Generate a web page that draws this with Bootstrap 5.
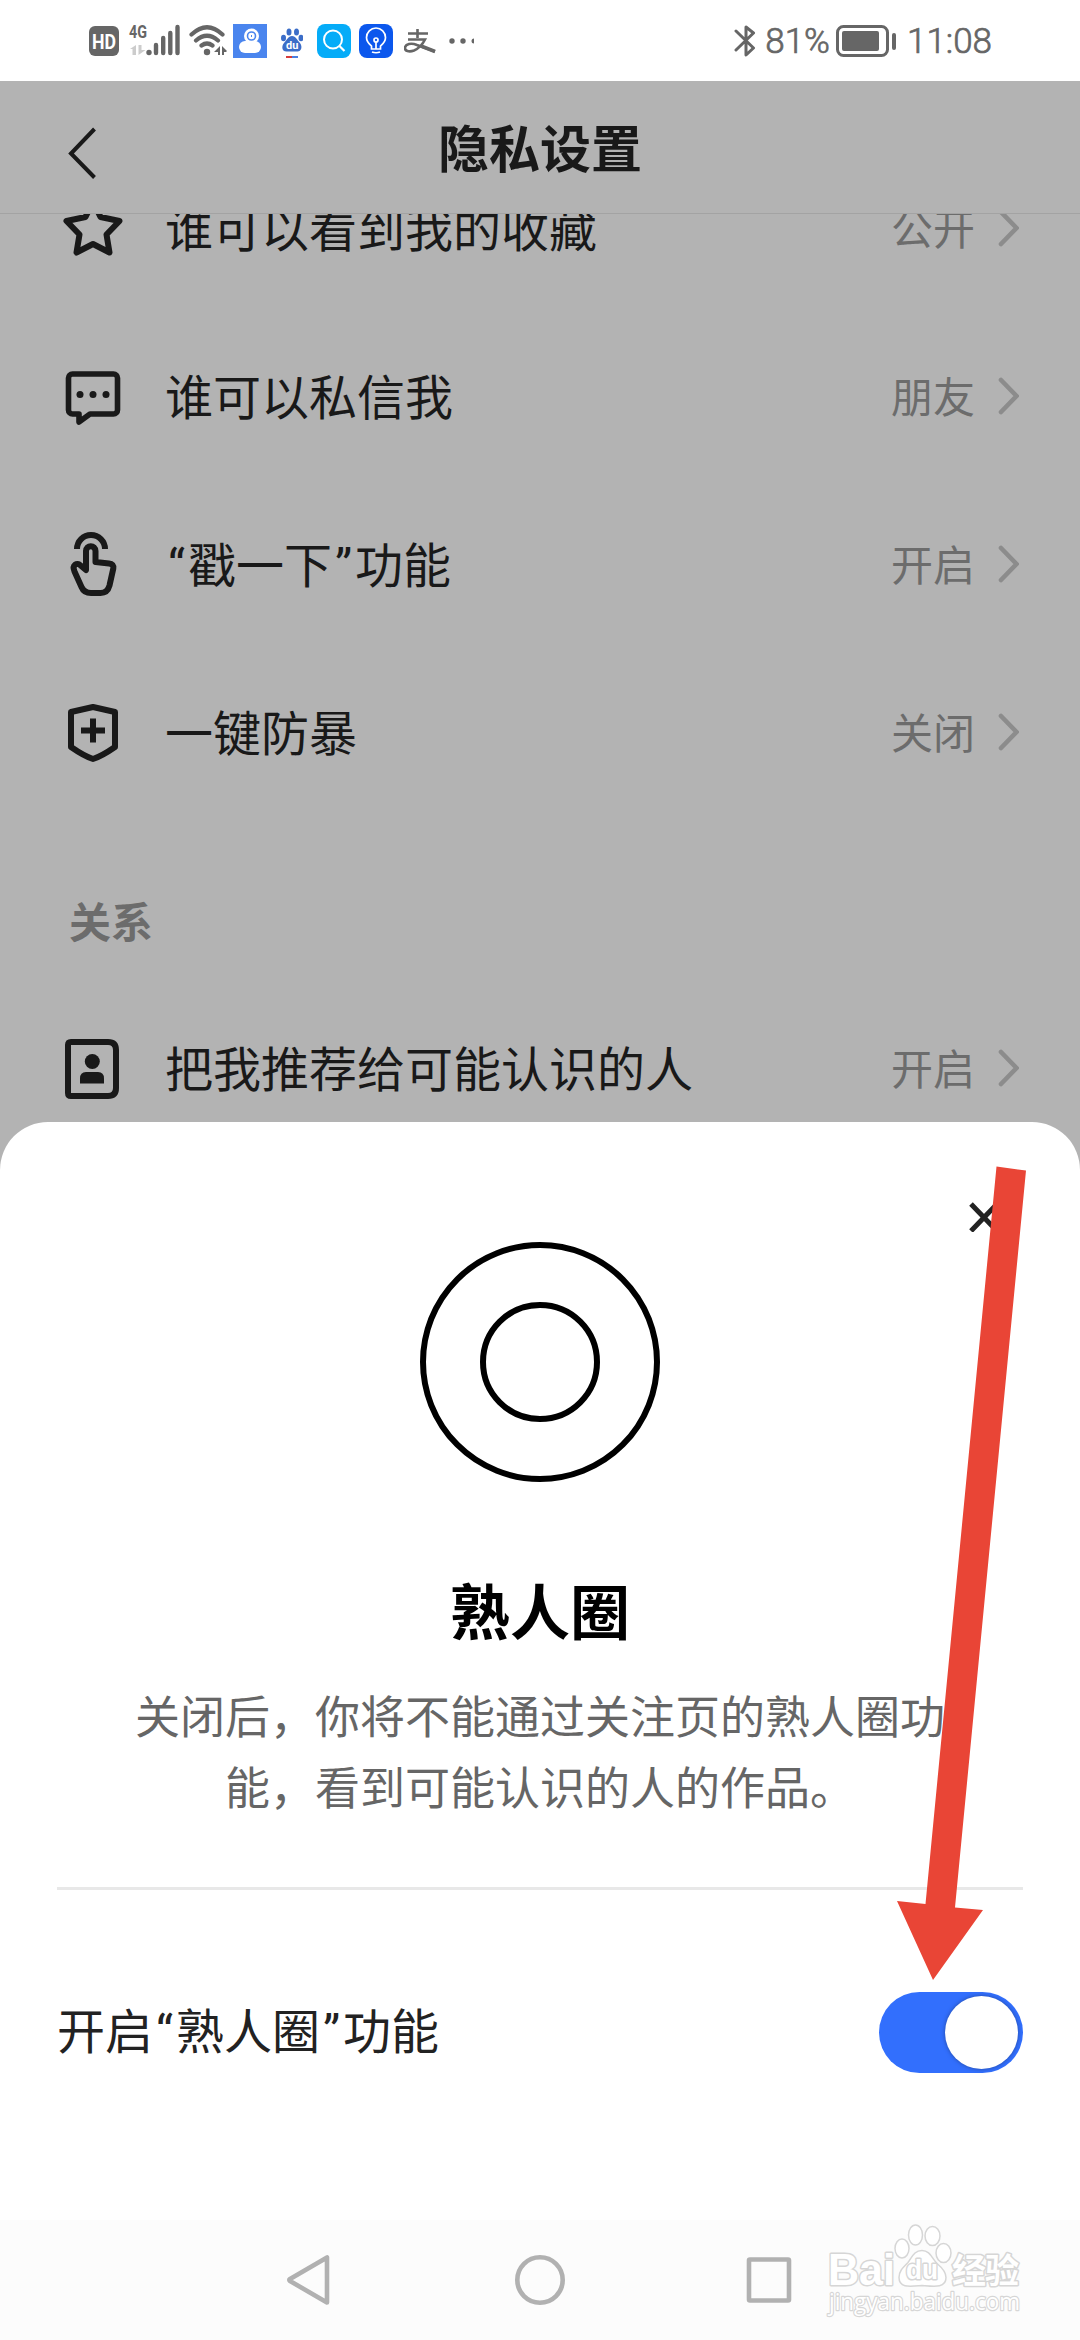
<!DOCTYPE html>
<html lang="zh-CN">
<head>
<meta charset="utf-8">
<meta name="viewport" content="width=device-width, initial-scale=1">
<title>隐私设置</title>
<link href="https://cdn.jsdelivr.net/npm/bootstrap@5.3.0/dist/css/bootstrap.min.css" rel="stylesheet">
<style>
html,body{height:100%}
body{font-family:"Noto Sans CJK SC",sans-serif;background:#b3b3b3;color:#191919;width:1080px;height:2340px;overflow:hidden;line-height:1}
svg{display:block;flex:none}
.status{height:81px;background:#fff;padding:0 88px 0 89px;color:#666}
.status-text{font-family:Roboto,"Noto Sans",sans-serif;font-size:35px;font-weight:300;line-height:40px;padding-top:2px;-webkit-text-stroke:.7px #666}
.topbar{height:133px;border-bottom:1px solid #a3a3a3;padding:0 68px}
.topbar h1{font-size:51px;font-weight:700;line-height:60px;padding-bottom:2px}
.side{width:28px}
.settings{height:908px}
.rows{margin-top:-70px}
.setting{height:168px;padding:0 61px 0 63px;font-size:48px;line-height:60px}
.setting svg.ic{margin-right:42px}
.setting>span{padding-bottom:5px}
.setting>.val{font-size:42px;color:#6c6c6c;margin-right:22px;padding-bottom:3px}
.sec{height:168px;padding:74px 0 0 69px;font-size:42px;line-height:60px;font-weight:700;color:#6c6c6c}
.qt{display:inline-block;width:23px;font-family:Roboto,sans-serif;text-align:center;line-height:1}
.sheet{height:1098px;border-radius:48px 48px 0 0;padding:0 57px;background:#fff}
.sheet-head{height:120px;padding:80px 24px 0}
.sheet h2{font-size:60px;line-height:72px;font-weight:700;color:#000;margin:91px 0 0}
.desc{width:810px;font-size:45px;line-height:71px;color:#666;margin:34px auto 0}
.rule{height:3px;background:#e8e8e8;margin-top:66px}
.opt{height:81px;margin-top:102px;font-size:48px;color:#222}
.opt>span{padding-bottom:5px}
.form-check-input.tog{width:144px;height:81px;margin:0;border:0;background-color:#326ffd;background-image:none;border-radius:41px;position:relative;box-shadow:none}
.tog::after{content:"";position:absolute;right:5px;top:4px;width:73px;height:73px;border-radius:50%;background:#fff;box-shadow:0 0 4px #2449a0}
.sysnav{height:120px;background:#fcfcfc}
.pointer{position:absolute;left:0;top:0;pointer-events:none}
.wm{position:absolute;left:820px;top:2218px}
</style>
<script src="https://cdn.jsdelivr.net/npm/bootstrap@5.3.0/dist/js/bootstrap.bundle.min.js"></script>
</head>
<body class="position-relative d-flex flex-column">
<header class="status d-flex justify-content-between align-items-center flex-shrink-0">
  <div class="d-flex align-items-center">
    <svg width="30" height="30" viewBox="0 0 30 30"><rect width="30" height="30" rx="6" fill="#666"/><text x="15" y="22.500" font-family="Roboto" font-size="20" font-weight="700" fill="#fff" text-anchor="middle" textLength="24" lengthAdjust="spacingAndGlyphs">HD</text></svg>
    <svg class="ms-2 overflow-visible" width="56" height="34" viewBox="127 24 56 34"><text x="129" y="38" font-family="Roboto" font-size="18" font-weight="700" fill="#666" textLength="18" lengthAdjust="spacingAndGlyphs">4G</text><g fill="#ccc"><path d="M130 49l6-4v10h-3.500v-6zM138.500 45h3v5h4l-7 5z"/></g><circle cx="149" cy="52.500" r="2.700" fill="#666"/><path d="M156 45v8M163.200 38v15M170.300 33v20M177.500 27v26" stroke="#666" stroke-width="4.400" stroke-linecap="round"/></svg>
    <svg style="margin-left:5px" width="40" height="34" viewBox="188 24 40 34"><g fill="none" stroke="#666" stroke-width="4.200" stroke-linecap="round"><path d="M191.500 34.500Q207 20 222.500 34.500M196 40.500Q207 31 218 40.500M201.500 45.500Q207 41.500 212.500 45.500"/></g><circle cx="207" cy="52" r="3.200" fill="#666"/><path d="M214 52l6-6v9h-2v-3zM222 46l5 5-1 1h-2v3h-2z" fill="#666"/></svg>
    <svg style="margin-left:5px" width="34" height="34" viewBox="0 0 34 34"><rect width="34" height="34" fill="#4a85ee"/><circle cx="18.500" cy="12" r="7.500" fill="#fff"/><rect x="6" y="17" width="22" height="12" rx="6" fill="#fff"/><circle cx="18.500" cy="12" r="4" fill="none" stroke="#4a85ee" stroke-width="1.600"/><path d="M18 11h1v2h-1z" fill="#4a85ee"/></svg>
    <svg style="margin-left:14px" width="22" height="34" viewBox="281 24 22 34"><g fill="#3b6dc8"><ellipse cx="283.500" cy="38" rx="2.500" ry="3.300"/><ellipse cx="289" cy="32" rx="2.500" ry="3.600"/><ellipse cx="296.500" cy="32" rx="2.500" ry="3.600"/><ellipse cx="301" cy="38" rx="2.500" ry="3.300"/><path d="M292 36c4 0 5 4 8 7 3 4 1 9-3 8.500h-10c-5 .5-6-5-3-8.500 3-3 4-7 8-7z"/></g><text x="292.200" y="49" font-family="Roboto" font-size="11" font-weight="700" fill="#fff" text-anchor="middle">du</text><path d="M286 57h6" stroke="#d63c3c" stroke-width="2"/><path d="M292 57h6" stroke="#4b7fe0" stroke-width="2"/></svg>
    <svg style="margin-left:14px" width="34" height="34" viewBox="0 0 34 34"><rect width="34" height="34" rx="8" fill="#05acf8"/><circle cx="16" cy="15.500" r="9" fill="none" stroke="#fff" stroke-width="2"/><path d="M22.500 22l5 5" stroke="#fff" stroke-width="2.200"/></svg>
    <svg style="margin-left:8px" width="34" height="34" viewBox="0 0 34 34"><rect width="34" height="34" rx="8" fill="#0b57ed"/><g fill="none" stroke="#fff" stroke-width="1.700"><path d="M12.500 25v-3c-2-2-5-4-5-8.500a9.500 9.500 0 0119 0c0 4.500-3 6.500-5 8.500v3zM13 28q4 1.500 8 0M17 18v7"/><circle cx="17" cy="16" r="2"/></g></svg>
    <svg style="margin-left:11px" width="32" height="34" viewBox="404 24 32 34"><g fill="none" stroke="#666" stroke-width="2.600"><path d="M408 33.500h20M417.500 29v9M408 39.500h17q-4 8-11 11c-5 2-9.500.5-9-3s6-5 12-2.500l18 6.500"/><path d="M421 46l14 5.500" stroke-width="3.600"/></g></svg>
    <svg style="margin-left:12px" width="26" height="10" viewBox="0 0 26 10"><g fill="#666"><circle cx="4" cy="5" r="2.700"/><circle cx="15" cy="5" r="2.700"/><path d="M26 2.500a2.500 2.500 0 000 5z"/></g></svg>
  </div>
  <div class="d-flex align-items-center">
    <svg width="22" height="34" viewBox="0 0 22 34"><path d="M2 7l17.500 17L12 31V3l7.500 6L2 26" fill="none" stroke="#666" stroke-width="3" stroke-linejoin="round" stroke-linecap="round"/></svg>
    <span class="status-text" style="margin-left:9px">81%</span>
    <svg style="margin-left:6px" width="60" height="34" viewBox="0 0 60 34"><rect x="1.500" y="2.500" width="50" height="29" rx="6" fill="none" stroke="#666" stroke-width="3"/><rect x="6" y="7" width="37" height="20" rx="2" fill="#666"/><rect x="56" y="9" width="4" height="17" rx="2" fill="#666"/></svg>
    <span class="status-text" style="margin-left:11px">11:08</span>
  </div>
</header>

<nav class="topbar d-flex align-items-center justify-content-between flex-shrink-0">
  <svg class="side" height="80" viewBox="0 0 28 80"><path d="M26.500 22L3 46.500 26.500 70.500" fill="none" stroke="#191919" stroke-width="4"/></svg>
  <h1 class="m-0">隐私设置</h1>
  <span class="side"></span>
</nav>

<main class="settings overflow-hidden flex-shrink-0">
  <div class="rows">
    <div class="setting d-flex align-items-center">
      <svg class="ic" width="60" height="68" viewBox="0 0 60 68"><path d="M30 7.500l7.500 15.500 19 4-13 13.500 3 18L30 50l-16.500 8.500 3-18L3.500 27l19-4z" fill="none" stroke="#191919" stroke-width="6" stroke-linejoin="round"/></svg>
      <span>谁可以看到我的收藏</span><span class="val ms-auto">公开</span>
      <svg width="22" height="40" viewBox="0 0 22 40"><path d="M4 4l15.500 16L4 36" fill="none" stroke="#8c8c8c" stroke-width="4.600" stroke-linecap="round"/></svg>
    </div>
    <div class="setting d-flex align-items-center">
      <svg class="ic" width="60" height="68" viewBox="0 0 60 68"><path d="M9.500 12h41a4 4 0 014 4v32a4 4 0 01-4 4H27l-11 8V52H9.500a4 4 0 01-4-4V16a4 4 0 014-4z" fill="none" stroke="#191919" stroke-width="5.600" stroke-linejoin="round"/><g fill="#191919"><circle cx="17" cy="32.500" r="3.500"/><circle cx="30" cy="32.500" r="3.500"/><circle cx="43" cy="32.500" r="3.500"/></g></svg>
      <span>谁可以私信我</span><span class="val ms-auto">朋友</span>
      <svg width="22" height="40" viewBox="0 0 22 40"><path d="M4 4l15.500 16L4 36" fill="none" stroke="#8c8c8c" stroke-width="4.600" stroke-linecap="round"/></svg>
    </div>
    <div class="setting d-flex align-items-center">
      <svg class="ic" width="60" height="68" viewBox="63 530 60 68"><g fill="none" stroke="#191919" stroke-width="6" stroke-linejoin="round"><path d="M77 549a14 14 0 0128 0"/><path d="M86 570v-19c0-6.500 9.500-6.500 9.500 0v11l13.500 1.500q5 .5 4.300 5l-3.800 17q-2 7.500-9 7.500h-9.500q-7 0-9.500-6l-7-15.500c-3-7 3-9 5.500-6.500z"/></g></svg>
      <span><span class="qt">“</span>戳一下<span class="qt">”</span>功能</span><span class="val ms-auto">开启</span>
      <svg width="22" height="40" viewBox="0 0 22 40"><path d="M4 4l15.500 16L4 36" fill="none" stroke="#8c8c8c" stroke-width="4.600" stroke-linecap="round"/></svg>
    </div>
    <div class="setting d-flex align-items-center">
      <svg class="ic" width="60" height="68" viewBox="63 698 60 68"><path d="M93 707l22 5v35q-13 9-22 12-9-3-22-12v-35z" fill="none" stroke="#191919" stroke-width="6" stroke-linejoin="round"/><path d="M81 730.500h24M93 718.500v24" stroke="#191919" stroke-width="6"/></svg>
      <span>一键防暴</span><span class="val ms-auto">关闭</span>
      <svg width="22" height="40" viewBox="0 0 22 40"><path d="M4 4l15.500 16L4 36" fill="none" stroke="#8c8c8c" stroke-width="4.600" stroke-linecap="round"/></svg>
    </div>
    <div class="sec">关系</div>
    <div class="setting d-flex align-items-center">
      <svg class="ic" width="60" height="68" viewBox="63 1034 60 68"><path d="M71 1042h37q8 0 8 8v38q0 8-8 8H71q-3 0-3-3v-48q0-3 3-3z" fill="none" stroke="#191919" stroke-width="6"/><circle cx="92.300" cy="1061.500" r="7.500" fill="#191919"/><path d="M80 1083.500v-5q0-6.500 6-6.500h12q6 0 6 6.500v5z" fill="#191919"/></svg>
      <span>把我推荐给可能认识的人</span><span class="val ms-auto">开启</span>
      <svg width="22" height="40" viewBox="0 0 22 40"><path d="M4 4l15.500 16L4 36" fill="none" stroke="#8c8c8c" stroke-width="4.600" stroke-linecap="round"/></svg>
    </div>
  </div>
</main>

<section class="sheet flex-shrink-0">
  <div class="sheet-head d-flex justify-content-end"><svg width="30" height="30" viewBox="0 0 30 30"><path d="M2 2l26 27M28 2L2 29" stroke="#222" stroke-width="5"/></svg></div>
  <svg class="mx-auto" width="240" height="240" viewBox="0 0 240 240"><g fill="none" stroke="#000" stroke-width="6"><circle cx="120" cy="120" r="117"/><circle cx="120" cy="120" r="57"/></g></svg>
  <h2 class="text-center">熟人圈</h2>
  <p class="desc text-center">关闭后，你将不能通过关注页的熟人圈功能，看到可能认识的人的作品。</p>
  <div class="rule"></div>
  <label class="opt form-switch p-0 d-flex align-items-center justify-content-between">
    <span>开启<span class="qt">“</span>熟人圈<span class="qt">”</span>功能</span>
    <input class="form-check-input tog" type="checkbox" role="switch" checked>
  </label>
</section>

<footer class="sysnav d-flex justify-content-center align-items-center flex-shrink-0">
  <svg width="510" height="54" viewBox="285 2253 510 54"><g fill="none" stroke="#b1b1b1" stroke-width="4.600" stroke-linejoin="round"><path d="M327 2257.500v45L290 2281q-1.500-1 0-2z"/><circle cx="540" cy="2280" r="22.700"/><rect x="749" y="2259.500" width="40" height="41" rx="1"/></g></svg>
</footer>

<svg class="pointer" width="1080" height="2340" viewBox="0 0 1080 2340"><path d="M996.500 1166.500l29.500 4L955 1907.500l28 2.500-50 70-36-79 28.500 3z" fill="#e94536"/></svg>

<svg class="wm" width="210" height="110" viewBox="820 2218 210 110">
  <g fill="#fff" stroke="#d6d6d6" stroke-width="1.500">
    <ellipse cx="902" cy="2248.500" rx="7" ry="9.500"/><ellipse cx="915.500" cy="2235" rx="7" ry="10"/><ellipse cx="932.500" cy="2236" rx="7.500" ry="9.500"/><ellipse cx="943.500" cy="2253" rx="7.500" ry="9.500"/>
    <path d="M922 2250.500c8 0 10 8 15 13 6 5 9 9 9 14 0 11-12 9-24 8-12 1-23 3-23-8 0-6 3-9 9-15 4-5 6-12 14-12z"/>
    <g style="paint-order:stroke" stroke-width="3" stroke-linejoin="round">
      <text x="828" y="2285" font-family="Liberation Sans" font-weight="700" font-size="45" textLength="67" lengthAdjust="spacingAndGlyphs">Bai</text>
      <text x="906" y="2279" font-family="Liberation Sans" font-weight="700" font-size="28" textLength="32" lengthAdjust="spacingAndGlyphs">du</text>
      <text x="952" y="2283" font-family="Noto Sans CJK SC" font-weight="700" font-size="34" textLength="67">经验</text>
      <text x="829" y="2310" font-family="Open Sans" font-size="24" stroke-width="2.400" textLength="191" lengthAdjust="spacingAndGlyphs">jingyan.baidu.com</text>
    </g>
  </g>
</svg>
</body>
</html>
